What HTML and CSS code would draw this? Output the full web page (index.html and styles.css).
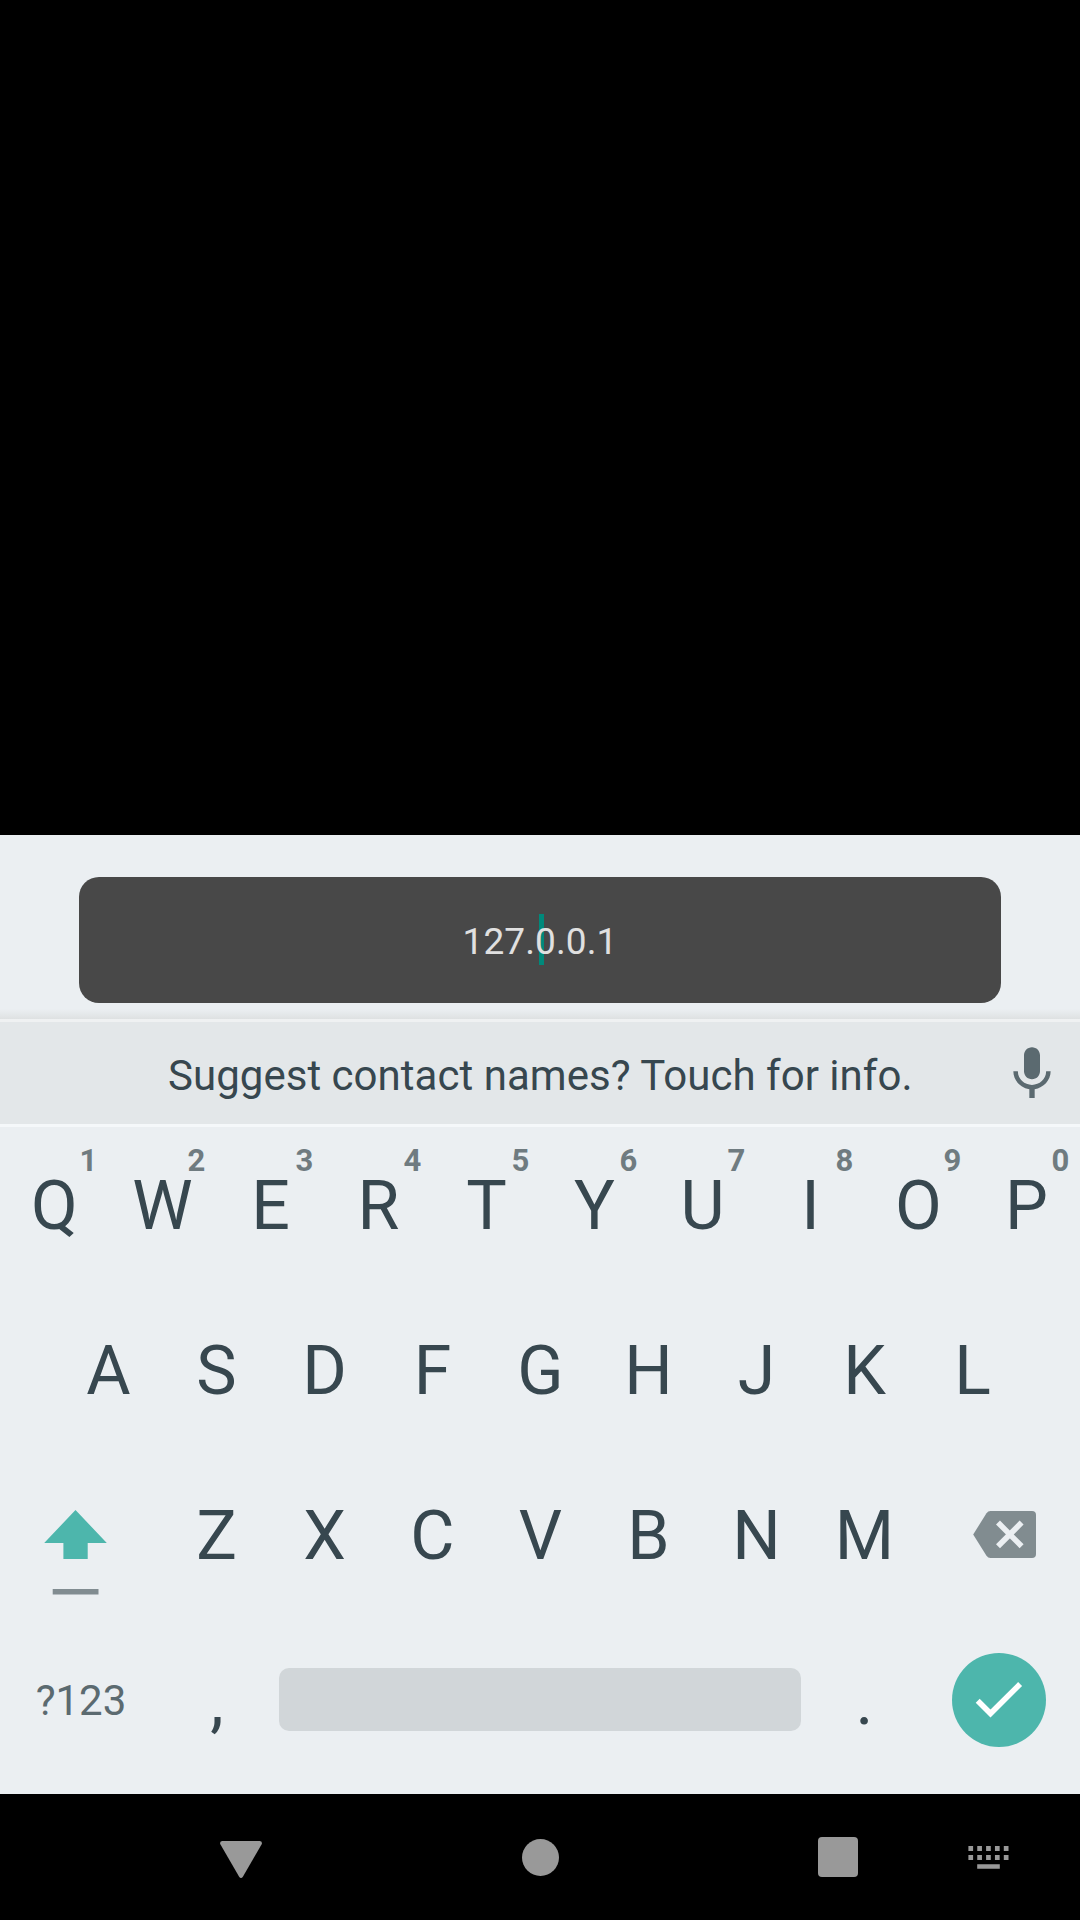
FILE: index.html
```html
<!DOCTYPE html>
<html lang="en">
<head>
<meta charset="utf-8">
<title>Address input</title>
<link rel="stylesheet" href="styles.css">
</head>
<body>
<main class="screen">
  <section class="input-panel">
    <div class="address"><span class="caret"></span><span class="address-text">127.0.0.1</span></div>
  </section>
  <section class="suggestions">
    <span class="suggestion">Suggest contact names? Touch for info.</span>
    <svg class="mic" viewBox="0 0 24 24"><path d="M12 14c1.66 0 3-1.34 3-3V5c0-1.66-1.34-3-3-3S9 3.34 9 5v6c0 1.66 1.34 3 3 3zm5.3-3c0 3-2.54 5.1-5.3 5.1S6.7 14 6.7 11H5c0 3.41 2.72 6.23 6 6.72V21h2v-3.28c3.28-.48 6-3.3 6-6.72h-1.7z"/></svg>
  </section>
  <section class="keyboard">
    <div class="row">
      <span class="key">Q<sup class="hint">1</sup></span><span class="key">W<sup class="hint">2</sup></span><span class="key">E<sup class="hint">3</sup></span><span class="key">R<sup class="hint">4</sup></span><span class="key">T<sup class="hint">5</sup></span><span class="key">Y<sup class="hint">6</sup></span><span class="key">U<sup class="hint">7</sup></span><span class="key">I<sup class="hint">8</sup></span><span class="key">O<sup class="hint">9</sup></span><span class="key">P<sup class="hint">0</sup></span>
    </div>
    <div class="row">
      <span class="key">A</span><span class="key">S</span><span class="key">D</span><span class="key">F</span><span class="key">G</span><span class="key">H</span><span class="key">J</span><span class="key">K</span><span class="key">L</span>
    </div>
    <div class="row">
      <span class="side-key"><svg class="side-icon" viewBox="0 0 162 165"><path fill="#4db6ac" d="M75.500 53 106.800 86H87.700v16H63.400V86H44.200z"/><path fill="#818c91" d="M52.700 132h45.800v5.500H52.700z"/></svg></span>
      <span class="key">Z</span><span class="key">X</span><span class="key">C</span><span class="key">V</span><span class="key">B</span><span class="key">N</span><span class="key">M</span>
      <span class="side-key"><svg class="side-icon" viewBox="0 0 162 165"><path fill="#818c90" d="M72.500 54H114q4 0 4 4v39q0 4-4 4H72.500q-2.500 0-4-2.200L55.200 77.500l13.300-21.300q1.500-2.200 4-2.200z"/><path fill="none" stroke="#ebeff2" stroke-width="5.600" d="m80 65.600 23.600 23.600m0-23.600L80 89.200"/></svg></span>
    </div>
    <div class="row row-bottom">
      <span class="symbols">?123</span>
      <span class="key comma">,</span>
      <span class="space"></span>
      <span class="key">.</span>
      <span class="done"><svg viewBox="0 0 94 94"><path fill="none" stroke="#fff" stroke-width="5.600" d="m25.700 47.800 12.800 12.800 29.600-29.600"/></svg></span>
    </div>
  </section>
  <nav class="navbar">
    <svg class="nav-back" viewBox="0 0 42 37"><path d="M2.500 0h37q3 0 2.300 3L23 35.500q-2 3-4 0L.2 3Q-.5 0 2.500 0z"/></svg>
    <svg class="nav-home" viewBox="0 0 37 37"><circle cx="18.500" cy="18.500" r="18.500"/></svg>
    <svg class="nav-recent" viewBox="0 0 40 40"><rect width="40" height="40" rx="4"/></svg>
    <svg class="nav-ime" viewBox="0 0 41 23"><path d="M.4 0h4.700v5H.4zm8.850 0h4.700v5h-4.700zm8.850 0h4.700v5h-4.700zm8.850 0h4.700v5h-4.700zm8.850 0h4.700v5h-4.700zM.4 9h4.700v5H.4zm8.850 0h4.700v5h-4.700zm8.850 0h4.700v5h-4.700zm8.850 0h4.700v5h-4.700zm8.850 0h4.700v5h-4.700zM9.200 18.200h22.600v4.600H9.200z"/></svg>
  </nav>
</main>
</body>
</html>
```
FILE: styles.css
```css
* { box-sizing: border-box; }
body { margin: 0; background: #000; font-family: Roboto, sans-serif; }
svg { display: block; flex: none; }
.screen { display: flex; flex-direction: column; justify-content: flex-end; width: 1080px; height: 1920px; overflow: hidden; }

.input-panel { height: 184px; padding: 42px 79px 0; background: linear-gradient(#ebeff2 174px, #dee1e2 184px); }
.address { position: relative; display: flex; justify-content: center; height: 126px; border-radius: 20px; background: #484848; color: #e0e0e0; font-size: 37px; line-height: 129px; }
.caret { position: absolute; left: 460px; top: 37px; width: 5px; height: 51px; background: #00897b; }
.address-text { position: relative; letter-spacing: .1px; }

.suggestions { display: flex; align-items: flex-start; height: 108px; padding-left: 168px; border-top: 3px solid #eff1f2; border-bottom: 3px solid #f5f8fa; background: #e3e7e9; color: #37474f; }
.suggestion { width: 832px; font-size: 42px; line-height: 107px; letter-spacing: .03px; white-space: nowrap; }
.mic { width: 64px; height: 64px; margin-top: 20px; fill: #5b6a70; }

.keyboard { height: 667px; background: #ebeff2; color: #37474f; }
.row { display: flex; justify-content: center; height: 165px; }
.key { position: relative; width: 108px; padding-left: 1px; font-size: 68px; line-height: 159px; text-align: center; }
.hint { position: absolute; right: -1px; top: 17px; width: 41px; color: #6f7b80; font-size: 31px; font-weight: 700; line-height: 34px; }
.side-key, .side-icon { width: 162px; height: 165px; }

.row-bottom { justify-content: flex-start; }
.symbols { width: 162px; color: #5b6a70; font-size: 42px; line-height: 158px; text-align: center; }
.comma { padding-left: 2px; }
.space { width: 522px; height: 63px; margin: 46px 9px 0; border-radius: 10px; background: #d1d6d9; }
.done { width: 94px; height: 94px; margin: 30.5px 0 0 33.5px; border-radius: 50%; background: #4db6ac; }

.navbar { display: flex; height: 126px; padding-left: 220px; background: #000; fill: #999; }
.nav-back { width: 42px; height: 37px; margin-top: 47px; }
.nav-home { width: 37px; height: 37px; margin: 45px 0 0 260px; }
.nav-recent { width: 40px; height: 40px; margin: 43px 0 0 259px; }
.nav-ime { width: 41px; height: 23px; margin: 52px 0 0 110px; }
```
